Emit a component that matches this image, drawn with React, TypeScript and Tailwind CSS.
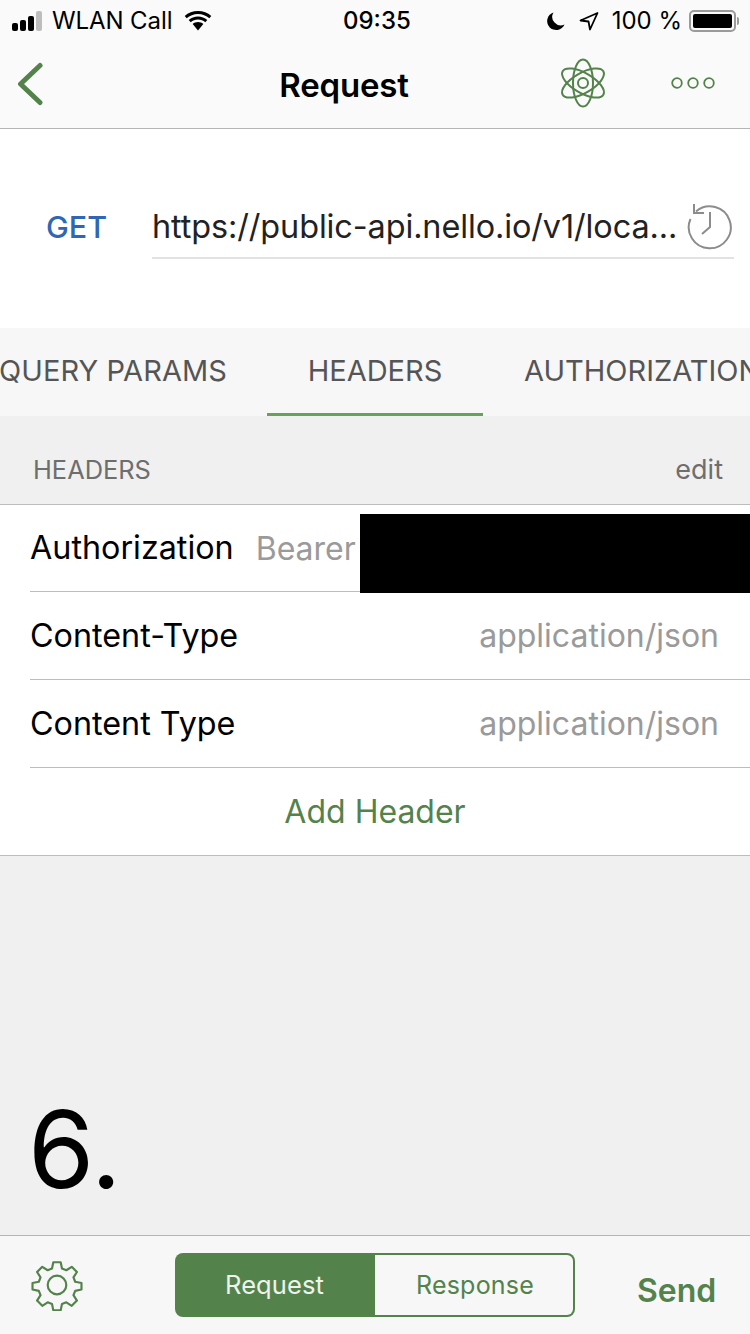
const green = "#53824b";

function StatusBar() {
  return (
    <div className="h-[41px] flex items-center justify-between pl-3 pr-[11px] text-[24px] leading-none text-black relative">
      <div className="flex items-center">
        <div className="flex items-end gap-[2px] h-[20px]">
          <div className="w-[6px] h-[8px] rounded-[2px] bg-black" />
          <div className="w-[6px] h-[11px] rounded-[2px] bg-black" />
          <div className="w-[6px] h-[15px] rounded-[2px] bg-black" />
          <div className="w-[6px] h-[20px] rounded-[2px] bg-[#bdbdbd]" />
        </div>
        <span className="ml-[10px] tracking-[-0.1px]">WLAN Call</span>
        <svg className="ml-[11px]" width="30" height="22" viewBox="0 0 30 22" fill="black">
          <path d="M15 4c4.400 0 8.300 1.600 11.300 4.300l2-2.300C24.800 2.800 20.100 1 15 1S5.200 2.800 1.700 6l2 2.300C6.700 5.600 10.600 4 15 4z" />
          <path d="M15 9.500c2.800 0 5.300 1 7.300 2.700l2-2.300C21.800 7.700 18.500 6.400 15 6.400S8.200 7.700 5.700 9.900l2 2.300c2-1.700 4.500-2.700 7.300-2.700z" />
          <path d="M15 12c-2 0-3.800.7-5.300 1.900L15 20.500l5.300-6.600C18.800 12.700 17 12 15 12z" />
        </svg>
      </div>
      <span className="absolute left-[343px] top-[9px] font-medium">09:35</span>
      <div className="flex items-center">
        <svg width="20" height="20" viewBox="0 0 20 20" fill="black">
          <path d="M7.500 1.500A9 9 0 1 0 18.500 13.500 8.500 8.500 0 0 1 7.500 1.500z" />
        </svg>
        <svg className="ml-[13px]" width="20" height="20" viewBox="0 0 20 20" fill="none" stroke="black" strokeWidth="1.800" strokeLinejoin="round">
          <path d="M18.500 2 1.500 9.500l8 1 1.500 8z" />
        </svg>
        <span className="ml-[13px]">100 %</span>
        <div className="ml-[7px] w-[47px] h-[22px] rounded-[5px] border-2 border-[#9b9b9b] p-[2px]">
          <div className="w-full h-full rounded-[2px] bg-black" />
        </div>
        <div className="w-[2px] h-[8px] rounded-r-[2px] bg-[#9b9b9b] ml-[1px]" />
      </div>
    </div>
  );
}

function NavBar() {
  return (
    <div className="h-[88px] relative flex items-center justify-center border-b border-[#b5b5b5]">
      <svg className="absolute left-[16px] top-[21px]" width="28" height="44" viewBox="0 0 28 44" fill="none" stroke={green} strokeWidth="5" strokeLinecap="round" strokeLinejoin="round">
        <path d="M24 3.500 4.500 22 24 40.500" />
      </svg>
      <span className="text-[33px] font-semibold text-black tracking-[-0.2px] mr-[62px] mt-[3px]">Request</span>
      <svg className="absolute left-[559px] top-[17px]" width="48" height="50" viewBox="0 0 48 50" fill="none" stroke={green} strokeWidth="2">
        <ellipse cx="24" cy="25" rx="10" ry="23.500" />
        <ellipse cx="24" cy="25" rx="10" ry="23.500" transform="rotate(60 24 25)" />
        <ellipse cx="24" cy="25" rx="10" ry="23.500" transform="rotate(-60 24 25)" />
        <circle cx="24" cy="25" r="5" />
      </svg>
      <svg className="absolute left-[670px] top-[35px]" width="46" height="14" viewBox="0 0 46 14" fill="none" stroke={green} strokeWidth="1.800">
        <circle cx="7" cy="7" r="4.800" />
        <circle cx="23" cy="7" r="4.800" />
        <circle cx="39" cy="7" r="4.800" />
      </svg>
    </div>
  );
}

function UrlBar() {
  return (
    <div className="h-[199px] bg-white flex items-center">
      <span className="w-[152px] shrink-0 pl-[46px] text-[30.5px] font-medium text-[#2f67b5] mt-[-3px]">GET</span>
      <div className="w-[582px] h-[62px] mt-[-1px] border-b-2 border-[#e2e2e2] flex items-center justify-between">
        <span className="text-[32.4px] text-[#222222] tracking-[-0.1px] whitespace-nowrap">https://public-api.nello.io/v1/loca...</span>
        <svg className="shrink-0" width="48" height="48" viewBox="0 0 48 48" fill="none" stroke="#8c8c8c" strokeWidth="2">
          <path d="M10 8.500A21 21 0 1 1 4.500 16" />
          <path d="M8 1v9h10" />
          <path d="M24 9v15l-8 7" />
        </svg>
      </div>
    </div>
  );
}

function Tabs() {
  return (
    <div className="h-[88px] bg-[#f7f7f7] overflow-hidden flex text-[29px] text-[#555555]">
      <span className="ml-[-1px] w-[268px] shrink-0 pt-[21px] tracking-[0.1px]">QUERY PARAMS</span>
      <div className="w-[216px] h-[88px] shrink-0 border-b-[3px] border-[#69a05c] text-center pt-[21px]">HEADERS</div>
      <span className="ml-[41px] shrink-0 pt-[21px] whitespace-nowrap">AUTHORIZATION</span>
    </div>
  );
}

function Row({ name, value }: { name: string; value: string }) {
  return (
    <div className="h-[88px] ml-[30px] pr-[31px] flex items-center justify-between border-b border-[#bcbcbc]">
      <span className="text-[32.3px] text-black mt-[1px]">{name}</span>
      <span className="text-[32px] text-[#9a9a9a] mt-[1px]">{value}</span>
    </div>
  );
}

function HeadersTable() {
  return (
    <div className="bg-white border-y border-[#bcbcbc] relative">
      <div className="h-[87px] ml-[30px] flex items-center border-b border-[#bcbcbc]">
        <span className="text-[32.3px] text-black mt-[1px]">Authorization</span>
        <span className="ml-[22px] text-[32px] text-[#9a9a9a] mt-[1px]">Bearer</span>
      </div>
      <Row name="Content-Type" value="application/json" />
      <Row name="Content Type" value="application/json" />
      <div className="h-[87px] flex items-center justify-center text-[32px] text-[#53824b]">Add Header</div>
      {/* redacted token */}
      <div className="absolute left-[360px] top-[9px] w-[390px] h-[79px] bg-black" />
    </div>
  );
}

function BottomBar() {
  return (
    <div className="h-[99px] bg-[#f7f7f7] border-t border-[#b5b5b5] flex items-start relative">
      <svg className="absolute left-[31px] top-[23px]" width="52" height="52" viewBox="0 0 24 24" fill="none" stroke={green} strokeWidth="1" strokeLinejoin="round">
        <circle cx="12" cy="12" r="4.300" />
        <path d="M10.300 1.500h3.400l.6 2.900 2 .8 2.500-1.600 2.400 2.400-1.600 2.500.8 2 2.900.6v3l-2.900.6-.8 2 1.600 2.500-2.400 2.400-2.500-1.600-2 .8-.6 2.900h-3.400l-.6-2.900-2-.8-2.500 1.600-2.400-2.400 1.600-2.500-.8-2-2.900-.6v-3l2.900-.6.8-2-1.600-2.500 2.400-2.400 2.500 1.600 2-.8z" />
      </svg>
      <div className="ml-[175px] mt-[17px] w-[400px] h-[64px] flex">
        <div className="w-[200px] h-full rounded-l-[8px] bg-[#53824b] text-white/90 text-[25.5px] tracking-[0.1px] flex items-center justify-center pr-[1px]">Request</div>
        <div className="w-[200px] h-full rounded-r-[8px] border-2 border-l-0 border-[#53824b] text-[#53824b] text-[25px] tracking-[0.2px] flex items-center justify-center pl-[2px] pt-[1px]">Response</div>
      </div>
      <span className="ml-[62px] mt-[31px] text-[32px] font-semibold text-[#53824b]">Send</span>
    </div>
  );
}

export default function App() {
  return (
    <div className="w-[750px] h-[1334px] bg-[#f0f0f0] flex flex-col overflow-hidden font-['Inter','Liberation_Sans',sans-serif]">
      <div className="bg-[#fafafa]">
        <StatusBar />
        <NavBar />
      </div>
      <UrlBar />
      <Tabs />
      <div className="h-[88px] flex items-center justify-between pl-[33px] pr-[27px] pt-[21px]">
        <span className="text-[25.4px] text-[#6e6e6e]">HEADERS</span>
        <span className="text-[27px] text-[#6e6e6e]">edit</span>
      </div>
      <HeadersTable />
      <div className="flex-1 flex items-end pl-[28px] pb-[32px]">
        <span className="text-[107px] leading-none text-black">6.</span>
      </div>
      <BottomBar />
    </div>
  );
}
